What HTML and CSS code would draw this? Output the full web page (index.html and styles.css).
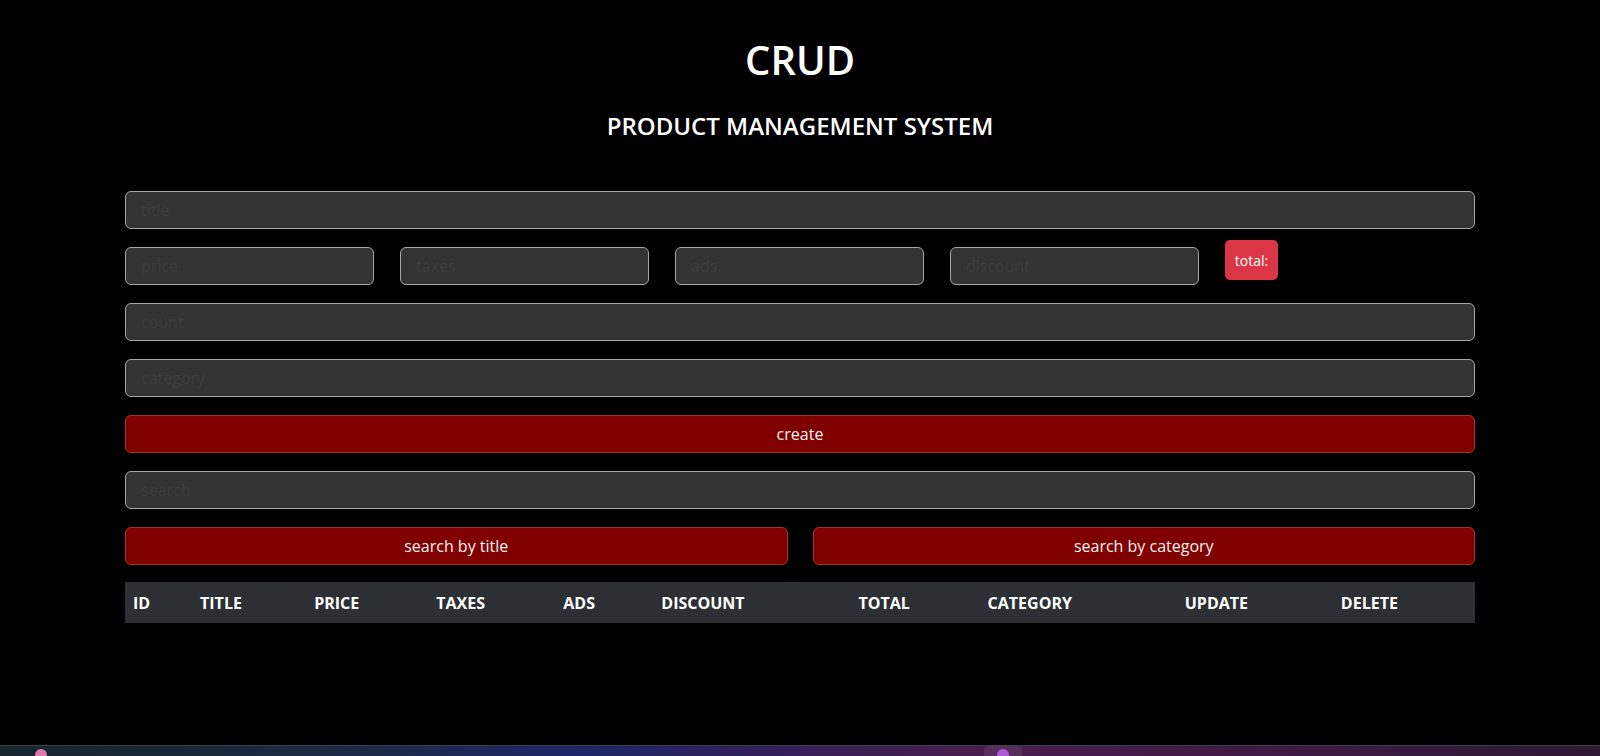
FILE: index.html
```html
<!DOCTYPE html>
<html lang="en">
<head>
<meta charset="utf-8">
<title>CRUD</title>
<link rel="stylesheet" href="styles.css">
</head>
<body>
<main class="crud">
  <header class="head">
    <h1 class="head-title">CRUD</h1>
    <h2 class="head-sub">PRODUCT MANAGEMENT SYSTEM</h2>
  </header>
  <section class="inputs">
    <input class="field" type="text" placeholder="title">
    <div class="price-row">
      <input class="field field-small" type="number" placeholder="price">
      <input class="field field-small" type="number" placeholder="taxes">
      <input class="field field-small" type="number" placeholder="ads">
      <input class="field field-small" type="number" placeholder="discount">
      <small class="total">total:</small>
    </div>
    <input class="field" type="number" placeholder="count">
    <input class="field" type="text" placeholder="category">
    <button class="btn">create</button>
  </section>
  <section class="search">
    <input class="field" type="text" placeholder="search">
    <div class="search-btns">
      <button class="btn">search by title</button>
      <button class="btn">search by category</button>
    </div>
  </section>
  <table class="table">
    <colgroup>
      <col class="c1"><col class="c2"><col class="c3"><col class="c4"><col class="c5">
      <col class="c6"><col class="c7"><col class="c8"><col class="c9"><col class="c10">
    </colgroup>
    <thead>
      <tr>
        <th>ID</th><th>TITLE</th><th>PRICE</th><th>TAXES</th><th>ADS</th>
        <th>DISCOUNT</th><th>TOTAL</th><th>CATEGORY</th><th>UPDATE</th><th>DELETE</th>
      </tr>
    </thead>
    <tbody></tbody>
  </table>
</main>
<footer class="taskbar">
  <span class="tb-icon tb-left"></span>
  <span class="tb-slot"><span class="tb-icon tb-mid"></span></span>
</footer>
</body>
</html>
```

FILE: styles.css
```css
* { box-sizing: border-box; }
html, body { height: 100%; }
body {
  margin: 0;
  background: #000;
  color: #fff;
  font-family: "Open Sans", "Noto Sans", sans-serif;
  display: flex;
  flex-direction: column;
  overflow: hidden;
}
.crud {
  flex: 1;
  width: 1350px;
  margin: 0 auto;
  display: flex;
  flex-direction: column;
}
.head {
  display: flex;
  flex-direction: column;
  align-items: center;
  padding-top: 36px;
}
.head-title {
  margin: 0;
  font-size: 40px;
  line-height: 48px;
  font-weight: 600;
}
.head-sub {
  margin: 27px 0 0;
  font-size: 24px;
  line-height: 29px;
  font-weight: 600;
}
.inputs {
  margin-top: 51px;
  display: flex;
  flex-direction: column;
  gap: 18px;
}
.search {
  margin-top: 18px;
  display: flex;
  flex-direction: column;
  gap: 18px;
}
.field {
  height: 38px;
  width: 100%;
  background: #333;
  border: 1px solid #a6a6a6;
  border-radius: 6px;
  padding: 0 15px;
  color: #ddd;
  font-family: inherit;
  font-size: 16px;
  outline: none;
}
.field::placeholder { color: #3e3e3e; }
.field::-webkit-outer-spin-button,
.field::-webkit-inner-spin-button { -webkit-appearance: none; margin: 0; }
.price-row {
  display: flex;
  align-items: flex-start;
  gap: 26px;
}
.field-small { width: 249px; flex: none; }
.total {
  margin-top: -7px;
  height: 40px;
  width: 53px;
  display: flex;
  align-items: center;
  justify-content: center;
  background: #dc3545;
  border-radius: 5px;
  font-size: 14px;
  color: #fff;
}
.btn {
  height: 38px;
  width: 100%;
  background: #800000;
  border: 1px solid #a8302f;
  border-radius: 6px;
  color: #f2f2f2;
  font-family: inherit;
  font-size: 16px;
  cursor: pointer;
}
.search-btns {
  display: grid;
  grid-template-columns: 1fr 1fr;
  gap: 25px;
}
.table {
  margin-top: 17px;
  width: 100%;
  border-collapse: collapse;
  table-layout: fixed;
}
.table th {
  background: #2c3034;
  padding: 8px;
  height: 41px;
  text-align: left;
  font-size: 16px;
  line-height: 24px;
  font-weight: 700;
  color: #fff;
  white-space: nowrap;
}
.c1 { width: 67px; }
.c2 { width: 114px; }
.c3 { width: 122px; }
.c4 { width: 127px; }
.c5 { width: 98px; }
.c6 { width: 197px; }
.c7 { width: 129px; }
.c8 { width: 197px; }
.c9 { width: 156px; }
.c10 { width: 142px; }
.taskbar {
  height: 11px;
  flex: none;
  position: relative;
  border-top: 1px solid #3a4048;
  background: linear-gradient(90deg, #17252c 0%, #1a2a44 22%, #1c2868 36%, #33205a 48%, #4a1d4c 62%, #3e1a44 80%, #2f1834 100%);
  display: flex;
  align-items: flex-end;
}
.tb-icon {
  width: 12px;
  height: 7px;
  border-radius: 6px 6px 0 0;
  display: block;
}
.tb-left {
  margin-left: 35px;
  background: #e07aa8;
}
.tb-slot {
  margin-left: 937px;
  width: 38px;
  height: 10px;
  border-radius: 4px 4px 0 0;
  background: rgba(255,255,255,0.08);
  display: flex;
  justify-content: center;
  align-items: flex-end;
}
.tb-mid { background: #b05cd8; }
```
